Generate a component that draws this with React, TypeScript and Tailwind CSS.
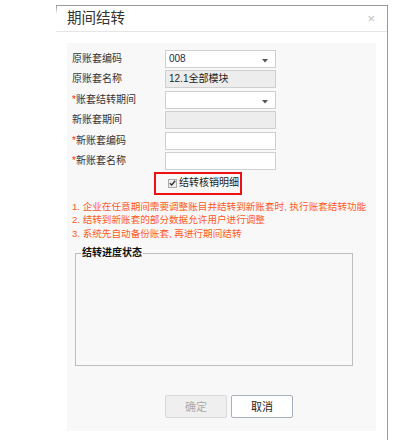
import React from 'react';

const FONT = { fontFamily: '"Liberation Sans", "Noto Sans CJK SC", sans-serif' };

type Row = { label: string; required?: boolean; value?: string; select?: boolean; disabled?: boolean };

const rows: Row[] = [
  { label: '原账套编码', value: '008', select: true },
  { label: '原账套名称', value: '12.1全部模块', disabled: true },
  { label: '账套结转期间', required: true, select: true },
  { label: '新账套期间', disabled: true },
  { label: '新账套编码', required: true },
  { label: '新账套名称', required: true },
];

const Caret = () => (
  <svg width="6" height="4" viewBox="0 0 6 4" className="absolute right-[7px] top-[8px]">
    <path d="M0 0h6L3 3.5z" fill="#555" />
  </svg>
);

const App: React.FC = () => {
  return (
    <div className="w-[414px] h-[440px] bg-white overflow-hidden pl-[56px] pt-[5px]" style={FONT}>
      <div className="relative w-[332px] h-[435px] border-t border-r border-[#9a9a9a]">
        <div className="absolute left-0 top-0 w-px h-[8px] bg-gradient-to-b from-[#9a9a9a] to-white" />

        <div className="h-[26px] flex items-center justify-between border-b border-[#e6e6e6] pl-[11px] pr-[12px]">
          <span className="text-[14.5px] text-[#333] leading-none">期间结转</span>
          <span className="text-[13px] text-[#c0c0c0] leading-none">×</span>
        </div>

        <div className="ml-[11px] mt-[11px] w-[309px] h-[388px] bg-[#f8f8f8] pl-[5px] pt-[7px]">
          <div className="flex flex-col gap-[2.4px]">
            {rows.map((r) => (
              <div key={r.label} className="flex items-center h-[18px]">
                <div className="w-[93px] text-[10px] text-[#333] leading-none whitespace-nowrap">
                  {r.required && <span className="text-[#ff2a00]">*</span>}
                  {r.label}
                </div>
                <div
                  className={
                    'relative w-[111px] h-[18px] border border-[#cfcfcf] flex items-center pl-[3px] text-[10px] leading-none ' +
                    (r.disabled ? 'bg-[#ededed] text-[#222]' : 'bg-white text-[#1f2a44]')
                  }
                >
                  {r.value}
                  {r.select && <Caret />}
                </div>
              </div>
            ))}
          </div>

          <div className="ml-[82px] mt-[2px] w-[88px] h-[23px] border-2 border-[#ee1111] flex items-center pl-[12px] gap-[2px]">
            <span className="w-[9px] h-[9px] border border-[#aaa] bg-[#eee] flex items-center justify-center">
              <svg width="7" height="6" viewBox="0 0 7 6">
                <path d="M0.8 3.2L2.7 5L6.2 0.8" stroke="#333" strokeWidth="1.4" fill="none" />
              </svg>
            </span>
            <span className="text-[10px] text-[#222] leading-none whitespace-nowrap">结转核销明细</span>
          </div>

          <div className="mt-[5px] text-[9.6px] leading-[13.5px] text-[#ff5a1e] whitespace-nowrap">
            <div>1. 企业在任意期间需要调整账目并结转到新账套时, 执行账套结转功能</div>
            <div>2. 结转到新账套的部分数据允许用户进行调整</div>
            <div>3. 系统先自动备份账套, 再进行期间结转</div>
          </div>

          <fieldset className="ml-[3px] mt-[8px] w-[278px] h-[118px] border border-[#bdbdbd] px-[5px]">
            <legend className="px-px text-[10px] font-bold text-[#111] leading-none">结转进度状态</legend>
          </fieldset>

          <div className="ml-[93px] mt-[29px] flex gap-[4px]">
            <button className="w-[62px] h-[23px] rounded-[2px] border border-[#d8d8d8] bg-[#efefef] text-[11px] text-[#aaa]">
              确定
            </button>
            <button className="w-[62px] h-[23px] rounded-[2px] border border-[#a9b0bd] bg-white text-[11px] text-[#222]">
              取消
            </button>
          </div>
        </div>
      </div>
    </div>
  );
};

export default App;
